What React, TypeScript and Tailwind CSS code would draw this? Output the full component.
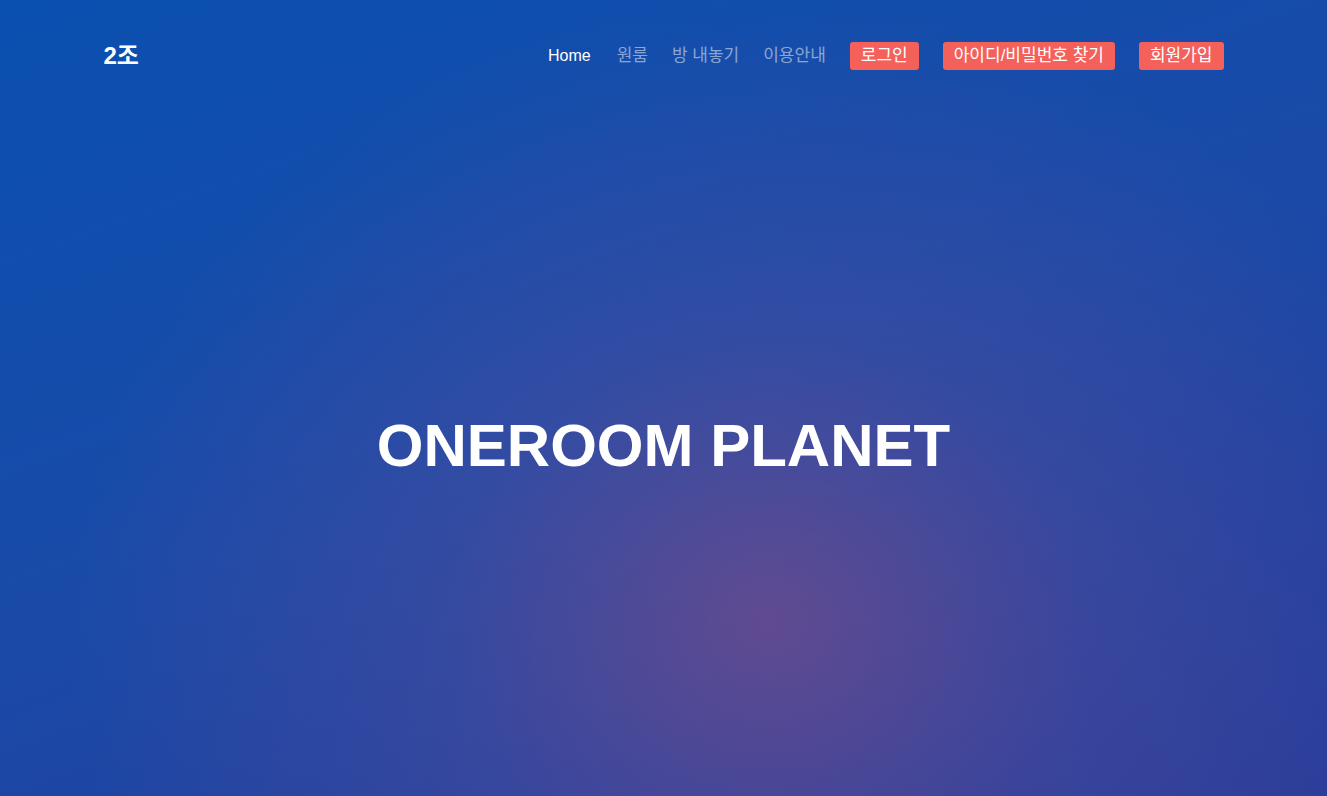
import React from "react";

export default function App() {
  const font = { fontFamily: '"Liberation Sans", "Noto Sans CJK KR", sans-serif' };
  const btn = "bg-[#f4605a] text-white rounded-[3px] px-[11px] h-[28px] flex items-center text-[17px]";
  return (
    <div
      className="relative w-full h-[796px] overflow-hidden bg-[linear-gradient(160deg,#0a50b0_0%,#1a4aa8_50%,#263c9a_100%)]"
      style={font}
    >
      <div className="absolute inset-0 bg-[radial-gradient(ellipse_700px_620px_at_58%_78%,rgba(150,80,130,0.55)_0%,rgba(110,80,150,0.3)_45%,rgba(60,70,160,0)_100%)]" />
      <div className="relative flex flex-col h-full">
        <header className="max-w-[1120px] w-full mx-auto flex justify-between pt-[42px] h-[112px] items-start">
          <div className="text-white font-bold text-[24px] leading-[28px]">2조</div>
          <nav className="flex items-center gap-6 text-[16px] leading-[28px]">
            <a className="text-white mr-[2px]">Home</a>
            <a className="text-white/50 text-[17px]">원룸</a>
            <a className="text-white/50 text-[17px]">방 내놓기</a>
            <a className="text-white/50 text-[17px]">이용안내</a>
            <a className={btn}>로그인</a>
            <a className={btn}>아이디/비밀번호 찾기</a>
            <a className={btn}>회원가입</a>
          </nav>
        </header>
        <main className="flex-1 flex items-center justify-center pb-[16px]">
          <h1 className="text-white font-bold text-[60px] leading-none">ONEROOM PLANET</h1>
        </main>
      </div>
    </div>
  );
}
